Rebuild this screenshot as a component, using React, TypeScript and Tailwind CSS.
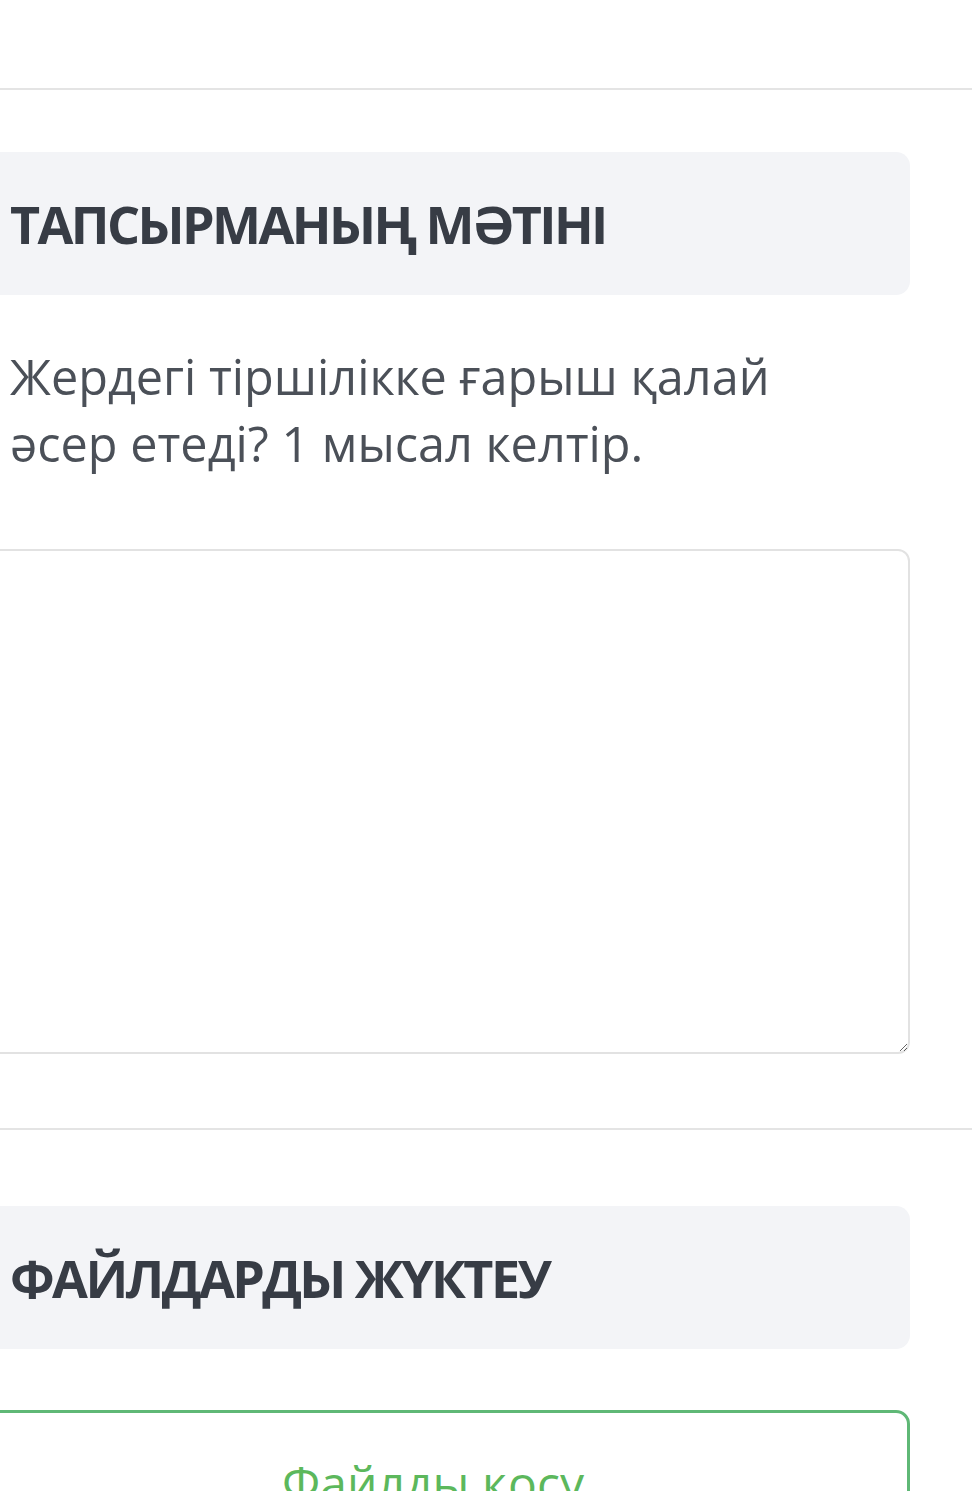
export default function App() {
  return (
    <div className="min-h-[1491px] w-[972px] overflow-hidden bg-white font-['Open_Sans',sans-serif]">
      <div className="h-[88px]"></div>
      <hr className="border-0 border-t-2 border-[#e4e4e4]" />

      <div className="ml-[-28px] w-[938px]">
        <div className="mt-[62px] flex h-[143px] items-center rounded-[14px] bg-[#f3f4f7] pl-[38px]">
          <h2 className="text-[52px] font-bold leading-none tracking-[-2.6px] text-[#373c45]">ТАПСЫРМАНЫҢ МӘТІНІ</h2>
        </div>

        <p className="mt-[48px] pl-[38px] pr-[120px] text-[48.6px] leading-[67px] text-[#4b5058]">
          Жердегі тіршілікке ғарыш қалай әсер етеді? 1 мысал келтір.
        </p>

        <textarea className="mt-[72px] block h-[505px] w-full rounded-[12px] border-2 border-[#e2e2e2] bg-white"></textarea>
      </div>

      <hr className="mt-[74px] border-0 border-t-2 border-[#e4e4e4]" />

      <div className="ml-[-28px] w-[938px]">
        <div className="mt-[76px] flex h-[143px] items-center rounded-[14px] bg-[#f3f4f7] pl-[38px]">
          <h2 className="text-[52px] font-bold leading-none tracking-[-2.6px] text-[#373c45]">ФАЙЛДАРДЫ ЖҮКТЕУ</h2>
        </div>

        <button className="mt-[61px] flex h-[140px] w-full items-start justify-center rounded-[14px] border-[3px] border-[#5fb876] bg-white pr-[16px] pt-[46px]">
          <span className="text-[48px] leading-none text-[#5cb85c]">Файлды қосу</span>
        </button>
      </div>
    </div>
  )
}
